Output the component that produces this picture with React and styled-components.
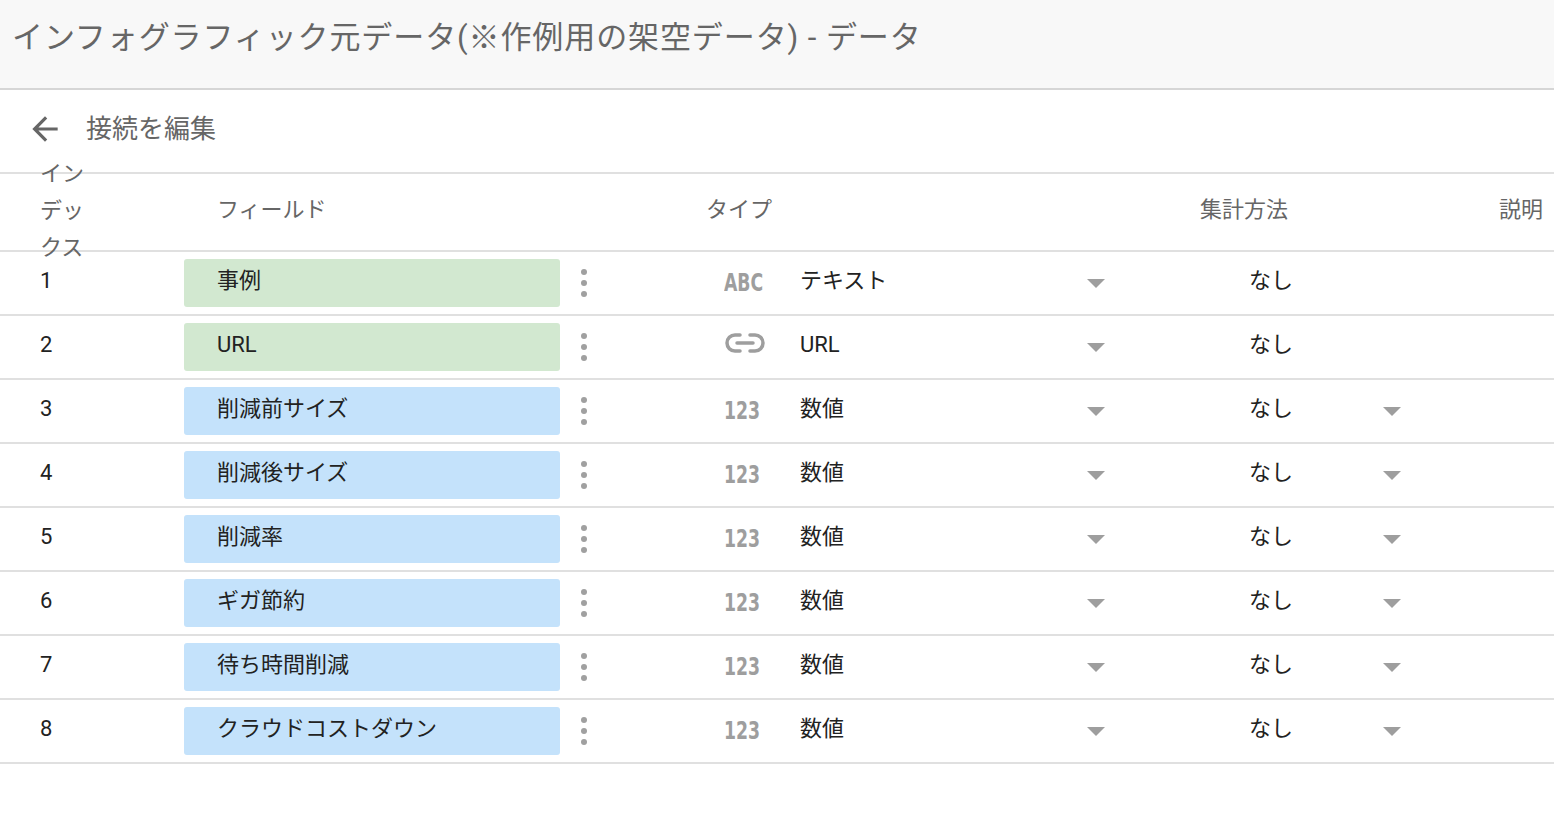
import React from 'react';
import styled, { createGlobalStyle } from 'styled-components';

const Global = createGlobalStyle`
  body {
    margin: 0;
    background: #fff;
    font-family: Roboto, "Noto Sans CJK JP", sans-serif;
  }
  * { box-sizing: border-box; }
`;

const COLS = '40px 144px 376px 48px 116px 76px 280px 32px 137px 127px 32px 1fr';

const Header = styled.div`
  height: 90px;
  background: #f8f8f8;
  border-bottom: 2px solid #d6d6d6;
  display: flex;
  align-items: center;
  padding: 0 0 14px 12px;
  font-size: 31px;
  letter-spacing: 0.9px;
  line-height: 1;
  color: #666;
`;

const SubBar = styled.div`
  height: 84px;
  border-bottom: 2px solid #e0e0e0;
  display: flex;
  align-items: center;
  gap: 22px;
  padding: 0 0 4px 26px;
  font-size: 26px;
  line-height: 1;
  color: #666;
`;

const Row = styled.div`
  display: grid;
  grid-template-columns: ${COLS};
  align-items: center;
  height: ${p => p.$h || 64}px;
  border-bottom: 2px solid #e0e0e0;
  font-size: 22px;
  line-height: 1;
  color: #222;
`;

const TextCell = styled.div`
  grid-column: ${p => p.$col};
  justify-self: ${p => p.$align || 'start'};
  margin-left: ${p => p.$ml || 0}px;
  margin-right: ${p => p.$mr || 0}px;
  padding-bottom: 5px;
  white-space: nowrap;
`;

const HeadCell = styled(TextCell)`
  color: #666;
`;

const IndexHead = styled.div`
  grid-column: 2;
  width: 50px;
  height: 37px;
  display: flex;
  flex-direction: column;
  justify-content: center;
  overflow: visible;
  line-height: 37px;
  color: #666;
  margin-top: -4px;
`;

const Chip = styled.div`
  grid-column: 3;
  height: 48px;
  border-radius: 3px;
  background: ${p => (p.$dim ? '#d2e8d0' : '#c4e2fb')};
  display: flex;
  align-items: center;
  padding: 0 0 5px 33px;
`;

const Dots = styled.div`
  grid-column: 4;
  justify-self: center;
  display: flex;
  flex-direction: column;
  gap: 5px;
  span {
    width: 6px;
    height: 6px;
    border-radius: 50%;
    background: #a0a0a0;
  }
`;

const TypeGlyph = styled.div`
  grid-column: 6;
  font-family: "DejaVu Sans Condensed", "Liberation Sans Narrow", sans-serif;
  font-weight: bold;
  font-size: 24px;
  color: #9e9e9e;
  transform: scaleX(0.8);
  transform-origin: left;
`;

const Caret = styled.div`
  grid-column: ${p => p.$col};
  justify-self: center;
  width: 0;
  height: 0;
  border-left: 9px solid transparent;
  border-right: 9px solid transparent;
  border-top: 9px solid #9e9e9e;
`;

const rows = [
  { n: 1, name: '事例', dim: true, type: 'abc', label: 'テキスト' },
  { n: 2, name: 'URL', dim: true, type: 'url', label: 'URL' },
  { n: 3, name: '削減前サイズ', type: 'num', label: '数値' },
  { n: 4, name: '削減後サイズ', type: 'num', label: '数値' },
  { n: 5, name: '削減率', type: 'num', label: '数値' },
  { n: 6, name: 'ギガ節約', type: 'num', label: '数値' },
  { n: 7, name: '待ち時間削減', type: 'num', label: '数値' },
  { n: 8, name: 'クラウドコストダウン', type: 'num', label: '数値' },
];

const LinkIcon = () => (
  <svg width="42" height="22" viewBox="0 0 42 22" fill="none" stroke="#9e9e9e" strokeWidth="3.5" strokeLinecap="round">
    <path d="M16 3 H11 a8 8 0 0 0 0 16 H16" />
    <path d="M26 3 H31 a8 8 0 0 1 0 16 H26" />
    <path d="M13 11 H29" />
  </svg>
);

const App = () => (
  <>
    <Global />
    <Header>インフォグラフィック元データ(※作例用の架空データ) - データ</Header>
    <SubBar>
      <svg width="38" height="38" viewBox="0 0 24 24" fill="#666">
        <path d="M20 11H7.83l5.59-5.59L12 4l-8 8 8 8 1.41-1.41L7.83 13H20v-2z" />
      </svg>
      接続を編集
    </SubBar>
    <Row $h={78}>
      <IndexHead><span>イン</span><span>デッ</span><span>クス</span></IndexHead>
      <HeadCell $col={3} $ml={33}>フィールド</HeadCell>
      <HeadCell $col={5} $ml={98}>タイプ</HeadCell>
      <HeadCell $col="9" $ml={88}>集計方法</HeadCell>
      <HeadCell $col={12} $align="end" $mr={11}>説明</HeadCell>
    </Row>
    {rows.map(r => (
      <Row key={r.n}>
        <TextCell $col={2}>{r.n}</TextCell>
        <Chip $dim={r.dim}>{r.name}</Chip>
        <Dots><span /><span /><span /></Dots>
        {r.type === 'url' ? (
          <TextCell $col={6}><LinkIcon /></TextCell>
        ) : (
          <TypeGlyph>{r.type === 'abc' ? 'ABC' : '123'}</TypeGlyph>
        )}
        <TextCell $col={7}>{r.label}</TextCell>
        <Caret $col={8} />
        <TextCell $col={10}>なし</TextCell>
        {r.type === 'num' && <Caret $col={11} />}
      </Row>
    ))}
  </>
);

export default App;
